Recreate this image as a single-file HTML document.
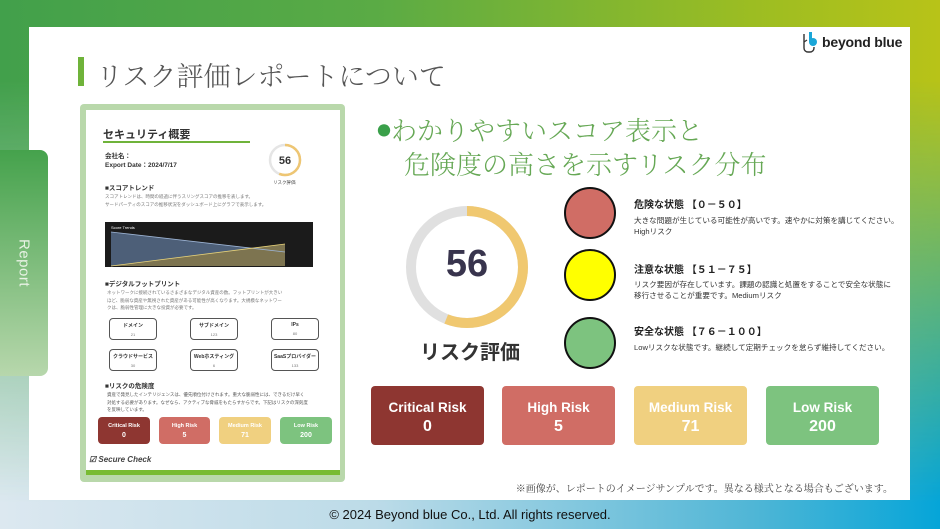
<!DOCTYPE html>
<html><head><meta charset="utf-8">
<style>
*{margin:0;padding:0;box-sizing:border-box}
body{width:940px;height:529px;overflow:hidden;position:relative;font-family:"Liberation Sans","Noto Sans CJK JP",sans-serif;background:linear-gradient(to right,#42a04b 0%,#5aab45 40%,#9cbd22 80%,#b8c318 100%)}
#bg2{position:absolute;inset:0;background:linear-gradient(to right,#dce8f0 0%,#bcdbe8 40%,#50b6d6 80%,#05a5d8 100%);-webkit-mask-image:linear-gradient(to bottom,transparent 15%,black 95%);mask-image:linear-gradient(to bottom,transparent 15%,black 95%)}
.a{position:absolute}
#panel{left:29px;top:27px;width:881px;height:473px;background:#fff}
#tab{left:0;top:150px;width:48px;height:226px;border-radius:0 8px 8px 0;background:linear-gradient(to bottom,#45a24c,#b7d7ac)}
#tab span{position:absolute;left:24px;top:113px;transform:translate(-50%,-50%) rotate(90deg);color:#e8f2e4;font-size:15px;letter-spacing:.5px;white-space:nowrap}
.t{white-space:nowrap}
.circ{width:52px;height:52px;border-radius:50%;border:2px solid #111}
.card{border-radius:4px;color:#fff;font-weight:bold;text-align:center}
.mini{position:absolute;border:1.5px solid #555;border-radius:4px;width:48px;height:22px;font-size:5px;text-align:center;color:#333;font-weight:bold;padding-top:3px}
.mini i{display:block;font-style:normal;font-weight:normal;font-size:4px;color:#777;margin-top:3px}
.sm{font-size:4.5px;color:#777;line-height:7.5px}
.lt{font-size:10px;font-weight:bold;color:#222}
.ld{font-size:7.6px;color:#333;line-height:11px}
</style></head><body>
<div id="bg2"></div>
<div class="a" id="panel"></div>
<div class="a" id="tab"><span>Report</span></div>

<div class="a" style="left:78px;top:57px;width:6px;height:29px;background:#6fb33a"></div>
<div class="a t" style="left:96px;top:55px;font-size:27px;color:#555;font-weight:300;font-family:'Noto Serif CJK SC','Noto Sans CJK JP',serif">リスク評価レポートについて</div>

<svg class="a" style="left:800px;top:30px" width="22" height="24" viewBox="0 0 22 24"><path d="M4 4v14a4 4 0 0 0 4 4h2a4 4 0 0 0 4-4v-1" fill="none" stroke="#333" stroke-width="1.4"/><path d="M4 12l3-2" stroke="#333" stroke-width="1.2"/><circle cx="13" cy="12" r="4" fill="#1aa6d8"/><rect x="9" y="2" width="3" height="10" fill="#1aa6d8"/></svg>
<div class="a t" style="left:822px;top:34px;font-size:14px;font-weight:bold;color:#222;letter-spacing:-.2px">beyond blue</div>

<div class="a" style="left:80px;top:104px;width:265px;height:378px;background:#b9d8ab;border-radius:4px"></div>
<div class="a" style="left:86px;top:110px;width:254px;height:365px;background:#fff"></div>
<div class="a t" style="left:103px;top:126px;font-size:11px;font-weight:bold;color:#333">セキュリティ概要</div>
<div class="a" style="left:103px;top:141px;width:147px;height:1.5px;background:#6fb33a"></div>
<div class="a t" style="left:105px;top:152px;font-size:6.5px;font-weight:bold;color:#333;line-height:9px">会社名：<br>Export Date：2024/7/17</div>
<svg class="a" style="left:268px;top:143px" width="34" height="34"><circle cx="17" cy="17" r="15" fill="none" stroke="#e5e5e5" stroke-width="2.5"/><circle cx="17" cy="17" r="15" fill="none" stroke="#eec673" stroke-width="2.5" stroke-dasharray="53 100" transform="rotate(-90 17 17)"/><text x="17" y="21" text-anchor="middle" font-size="11" font-weight="bold" fill="#333" font-family="Liberation Sans">56</text></svg>
<div class="a t" style="left:273px;top:180px;font-size:4.5px;color:#444">リスク評価</div>
<div class="a t" style="left:105px;top:182px;font-size:6.5px;font-weight:bold;color:#333">■スコアトレンド</div>
<div class="a t sm" style="left:105px;top:193px">スコアトレンドは、時間の経過に伴うスリングスコアの推移を表します。<br>サードパーティのスコアの推移状況をダッシュボード上にグラフで表示します。</div>
<svg class="a" style="left:105px;top:222px" width="208" height="45"><rect width="208" height="45" fill="#1b1b1b"/><text x="6" y="7" font-size="4" fill="#fff" font-family="Liberation Sans">Score Trends</text><polygon points="6,10 180,30 180,44 6,44" fill="#4d5f78"/><polygon points="6,44 180,22 180,44" fill="#7d7450"/><line x1="6" y1="10" x2="180" y2="30" stroke="#9cb3d3" stroke-width=".8"/><line x1="6" y1="44" x2="180" y2="22" stroke="#e8d37a" stroke-width=".8"/></svg>
<div class="a t" style="left:105px;top:278px;font-size:6.5px;font-weight:bold;color:#333">■デジタルフットプリント</div>
<div class="a t sm" style="left:107px;top:289px">ネットワークに接続されているさまざまなデジタル資産の数。フットプリントが大きい<br>ほど、脆弱な資産や無視された資産がある可能性が高くなります。大規模なネットワー<br>クは、脆弱性管理に大きな投資が必要です。</div>
<div class="mini" style="left:109px;top:318px">ドメイン<i>21</i></div>
<div class="mini" style="left:190px;top:318px">サブドメイン<i>123</i></div>
<div class="mini" style="left:271px;top:318px">IPs<i>80</i></div>
<div class="mini" style="left:109px;top:349px">クラウドサービス<i>30</i></div>
<div class="mini" style="left:190px;top:349px">Webホスティング<i>6</i></div>
<div class="mini" style="left:271px;top:349px">SaaSプロバイダー<i>133</i></div>
<div class="a t" style="left:105px;top:380px;font-size:6.5px;font-weight:bold;color:#333">■リスクの危険度</div>
<div class="a t sm" style="left:107px;top:391px;color:#555">資産で発見したインテリジェンスは、優先順位付けされます。重大な脆弱性には、できるだけ早く<br>対処する必要があります。なぜなら、アクティブな脅威をもたらすからです。下記はリスクの深刻度<br>を反映しています。</div>
<div class="a card" style="left:98px;top:417px;width:52px;height:27px;background:#8e3631;font-size:5.5px;padding-top:5px;line-height:9px">Critical Risk<br><span style="font-size:7px">0</span></div>
<div class="a card" style="left:159px;top:417px;width:51px;height:27px;background:#d06d65;font-size:5.5px;padding-top:5px;line-height:9px">High Risk<br><span style="font-size:7px">5</span></div>
<div class="a card" style="left:219px;top:417px;width:52px;height:27px;background:#f0d080;font-size:5.5px;padding-top:5px;line-height:9px">Medium Risk<br><span style="font-size:7px">71</span></div>
<div class="a card" style="left:280px;top:417px;width:52px;height:27px;background:#7dc37f;font-size:5.5px;padding-top:5px;line-height:9px">Low Risk<br><span style="font-size:7px">200</span></div>
<div class="a t" style="left:89px;top:455px;font-size:8px;font-weight:bold;font-style:italic;color:#444">☑ Secure Check</div>
<div class="a" style="left:86px;top:470px;width:254px;height:5px;background:#78bb33"></div>

<div class="a t" style="left:377px;top:111px;font-size:26px;color:#66a855;font-family:'Noto Serif CJK SC',serif;font-weight:300"><span style="color:#3aa04a;font-size:14px;vertical-align:4px">●</span>わかりやすいスコア表示と</div>
<div class="a t" style="left:404px;top:145px;font-size:26px;color:#66a855;font-family:'Noto Serif CJK SC',serif;font-weight:300">危険度の高さを示すリスク分布</div>

<svg class="a" style="left:405px;top:205px" width="124" height="124"><circle cx="62" cy="62" r="56" fill="none" stroke="#e0e0e0" stroke-width="10"/><circle cx="62" cy="62" r="56" fill="none" stroke="#f0c870" stroke-width="10" stroke-dasharray="197 400" transform="rotate(-90 62 62)"/></svg>
<div class="a" style="left:405px;top:243px;width:124px;text-align:center;font-size:38px;font-weight:bold;color:#38344d">56</div>
<div class="a t" style="left:420px;top:336px;font-size:20px;font-weight:bold;color:#333">リスク評価</div>

<div class="a circ" style="left:564px;top:187px;background:#d06d65"></div>
<div class="a circ" style="left:564px;top:249px;background:#ffff00"></div>
<div class="a circ" style="left:564px;top:317px;background:#7dc37f"></div>
<div class="a t lt" style="left:634px;top:196px">危険な状態 【０－５０】</div>
<div class="a t ld" style="left:634px;top:215px">大きな問題が生じている可能性が高いです。速やかに対策を講じてください。<br>Highリスク</div>
<div class="a t lt" style="left:634px;top:261px">注意な状態 【５１－７５】</div>
<div class="a t ld" style="left:634px;top:279px">リスク要因が存在しています。課題の認識と処置をすることで安全な状態に<br>移行させることが重要です。Mediumリスク</div>
<div class="a t lt" style="left:634px;top:323px">安全な状態 【７６－１００】</div>
<div class="a t ld" style="left:634px;top:342px">Lowリスクな状態です。継続して定期チェックを怠らず維持してください。</div>

<div class="a card" style="left:371px;top:386px;width:113px;height:59px;background:#8e3631;font-size:13.5px;padding-top:12px;line-height:19px">Critical Risk<br><span style="font-size:16px">0</span></div>
<div class="a card" style="left:502px;top:386px;width:113px;height:59px;background:#d06d65;font-size:13.5px;padding-top:12px;line-height:19px">High Risk<br><span style="font-size:16px">5</span></div>
<div class="a card" style="left:634px;top:386px;width:113px;height:59px;background:#f0d080;font-size:13.5px;padding-top:12px;line-height:19px">Medium Risk<br><span style="font-size:16px">71</span></div>
<div class="a card" style="left:766px;top:386px;width:113px;height:59px;background:#7dc37f;font-size:13.5px;padding-top:12px;line-height:19px">Low Risk<br><span style="font-size:16px">200</span></div>

<div class="a t" style="right:47px;top:480px;font-size:10px;color:#444;font-family:'Noto Serif CJK SC',serif">※画像が、レポートのイメージサンプルです。異なる様式となる場合もございます。</div>
<div class="a t" style="left:0;width:940px;text-align:center;top:507px;font-size:13px;color:#111">© 2024 Beyond blue Co., Ltd. All rights reserved.</div>
</body></html>
